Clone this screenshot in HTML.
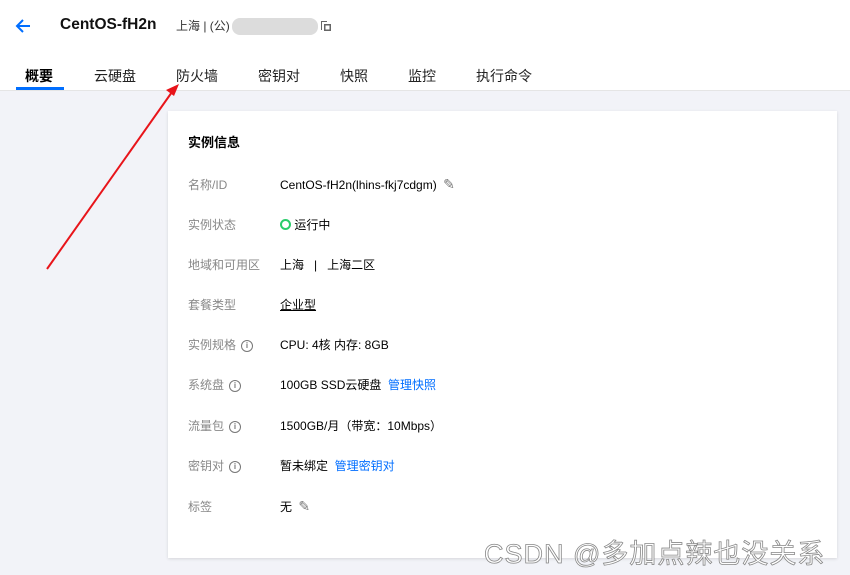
<!DOCTYPE html>
<html><head><meta charset="utf-8"><style>
body{margin:0;width:850px;height:575px;background:#f2f3f8;font-family:"Liberation Sans","Noto Sans CJK SC",sans-serif;position:relative;overflow:hidden;font-size:12px;color:#000}
.top{position:absolute;left:0;top:0;width:850px;height:90px;background:#fff;border-bottom:1px solid #e5e5e5}
.abs{position:absolute;white-space:nowrap}
.tab{position:absolute;top:66px;font-size:14px;color:#222}
.card{position:absolute;left:168px;top:111px;width:669px;height:447px;background:#fff;box-shadow:0 1px 3px rgba(0,0,0,.12)}
.lbl{position:absolute;left:20px;color:#888;font-size:12px}
.val{position:absolute;left:112px;font-size:12px;color:#000}
.i{display:inline-block;width:10px;height:10px;border:1.3px solid #777;border-radius:50%;font-size:8px;line-height:10px;text-align:center;color:#777;vertical-align:middle;margin-left:5px;font-weight:bold}
.pen{color:#777;font-size:14px;margin-left:3px}
a{color:#006eff;text-decoration:none}
</style></head><body>
<div class="top"></div>
<svg class="abs" style="left:14px;top:17px" width="18" height="18"><path d="M16 9H3M9 3L3 9l6 6" stroke="#006eff" stroke-width="2" fill="none"/></svg>
<div class="abs" style="left:60px;top:16px;font-size:15.5px;font-weight:bold;color:#111">CentOS-fH2n</div>
<div class="abs" style="left:176px;top:17px;font-size:12px;color:#333">上海 | (公)</div>
<div class="abs" style="left:232px;top:18px;width:86px;height:17px;background:#dcdcdc;border-radius:8px"></div>
<svg class="abs" style="left:320px;top:20px" width="12" height="12"><path d="M1 1h6v1H2v8H1z M4 4h7v7H4z M5.5 5.5v4h4v-4z" fill="#666" fill-rule="evenodd"/></svg>
<div class="tab" style="left:25px;font-weight:bold;color:#000">概要</div>
<div class="abs" style="left:16px;top:87px;width:48px;height:3px;background:#006eff"></div>
<div class="tab" style="left:94px">云硬盘</div>
<div class="tab" style="left:176px">防火墙</div>
<div class="tab" style="left:258px">密钥对</div>
<div class="tab" style="left:340px">快照</div>
<div class="tab" style="left:408px">监控</div>
<div class="tab" style="left:476px">执行命令</div>
<div class="card">
<div class="abs" style="left:20px;top:21px;font-size:13px;font-weight:bold">实例信息</div>
<div class="lbl" style="top:65px">名称/ID</div><div class="val" style="top:65px">CentOS-fH2n(lhins-fkj7cdgm) <span class="pen">✎</span></div>
<div class="lbl" style="top:105px">实例状态</div><div class="val" style="top:105px"><span style="display:inline-block;width:7px;height:7px;border:2px solid #29cc6a;border-radius:50%;vertical-align:-1px"></span> 运行中</div>
<div class="lbl" style="top:145px">地域和可用区</div><div class="val" style="top:145px">上海 &nbsp; | &nbsp; 上海二区</div>
<div class="lbl" style="top:185px">套餐类型</div><div class="val" style="top:185px;text-decoration:underline">企业型</div>
<div class="lbl" style="top:225px">实例规格<span class="i">i</span></div><div class="val" style="top:225px">CPU: 4核 内存: 8GB</div>
<div class="lbl" style="top:265px">系统盘<span class="i">i</span></div><div class="val" style="top:265px">100GB SSD云硬盘 &nbsp;<a>管理快照</a></div>
<div class="lbl" style="top:306px">流量包<span class="i">i</span></div><div class="val" style="top:306px">1500GB/月（带宽：10Mbps）</div>
<div class="lbl" style="top:346px">密钥对<span class="i">i</span></div><div class="val" style="top:346px">暂未绑定 &nbsp;<a>管理密钥对</a></div>
<div class="lbl" style="top:387px">标签</div><div class="val" style="top:387px">无 <span class="pen">✎</span></div>
</div>
<svg class="abs" style="left:0;top:0" width="850" height="575"><path d="M47 269L172 92" stroke="#e8141a" stroke-width="2"/><path d="M179 84l-13 6 8 6z" fill="#e8141a"/></svg>
<div class="abs" style="left:484px;top:532px;font-size:27px;letter-spacing:1px;color:#fff;-webkit-text-stroke:0.8px #888">CSDN @多加点辣也没关系</div>
</body></html>
